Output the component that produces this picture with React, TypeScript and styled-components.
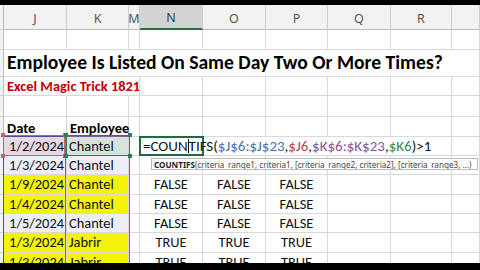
import * as React from 'react'
import styled, { createGlobalStyle } from 'styled-components'

const CELL_FONT = 'Carlito, Calibri, Lato, "Liberation Sans", sans-serif'
const UI_FONT = '"Segoe UI", "Noto Sans", "Liberation Sans", sans-serif'

const WIDTHS = [4, 63, 62, 11, 63, 63, 62, 63, 61, 28]
const LETTERS = ['', 'J', 'K', 'M', 'N', 'O', 'P', 'Q', 'R', '']
// last row runs past the bottom bar and gets clipped by the sheet
const HEIGHTS = [25, 20, 27, 19, 21, 20, 19, 19, 20, 19, 19, 20, 20]

const YELLOW = '#f4f406'
const LAVENDER = '#eeeef8'
const GRID = '#d9d9d9'

type DataRow = { date: string; name: string; fill: string; flags?: string[] }

const dataRows: DataRow[] = [
    { date: '1/3/2024', name: 'Chantel', fill: LAVENDER },
    { date: '1/9/2024', name: 'Chantel', fill: YELLOW, flags: ['FALSE', 'FALSE', 'FALSE'] },
    { date: '1/4/2024', name: 'Chantel', fill: YELLOW, flags: ['FALSE', 'FALSE', 'FALSE'] },
    { date: '1/5/2024', name: 'Chantel', fill: LAVENDER, flags: ['FALSE', 'FALSE', 'FALSE'] },
    { date: '1/3/2024', name: 'Jabrir', fill: YELLOW, flags: ['TRUE', 'TRUE', 'TRUE'] },
    { date: '1/3/2024', name: 'Jabrir', fill: YELLOW, flags: ['TRUE', 'TRUE', 'TRUE'] },
]

const GlobalStyle = createGlobalStyle`
    html, body {
        margin: 0;
        padding: 0;
        background: #000;
    }
    body {
        width: 480px;
        height: 270px;
        overflow: hidden;
        font-family: ${CELL_FONT};
    }
`

const Frame = styled.div`
    display: flex;
    flex-direction: column;
    width: 480px;
    height: 270px;
    background: #000;
`

const Bar = styled.div<{ $h: number }>`
    height: ${p => p.$h}px;
    flex: none;
    background: #000;
`

const Sheet = styled.div`
    position: relative;
    flex: none;
    height: 258px;
    overflow: hidden;
    background: #fff;
    display: grid;
    grid-template-columns: ${WIDTHS.map(w => w + 'px').join(' ')};
    grid-template-rows: ${HEIGHTS.map(h => h + 'px').join(' ')};
`

const ColHead = styled.div<{ $active?: boolean }>`
    box-sizing: border-box;
    display: flex;
    align-items: center;
    justify-content: center;
    background: ${p => (p.$active ? '#d3d3d3' : '#f2f2f2')};
    border-right: 1px solid #cfcfcf;
    border-bottom: ${p => (p.$active ? '2px solid #217346' : '1px solid #bdbdbd')};
    font-family: ${UI_FONT};
    font-size: 12.5px;
    color: ${p => (p.$active ? '#2b4a36' : '#555')};
    padding-top: 2px;
`

const RowHead = styled.div`
    box-sizing: border-box;
    background: #f2f2f2;
    border-right: 1px solid #bdbdbd;
    border-bottom: 1px solid #d4d4d4;
`

const Cell = styled.div<{ $fill?: string; $align?: string; $span?: string }>`
    box-sizing: border-box;
    display: flex;
    align-items: center;
    justify-content: ${p => p.$align || 'flex-start'};
    padding: 0 2px 0 2px;
    white-space: nowrap;
    overflow: visible;
    grid-column: ${p => p.$span || 'auto'};
    background: ${p => p.$fill || 'transparent'};
    border-right: 1px solid ${GRID};
    border-bottom: 1px solid ${GRID};
    font-family: ${CELL_FONT};
    font-size: 14.4px;
    color: #111;
    line-height: 1;
`

const Title = styled.span`
    font-size: 19.6px;
    font-weight: 700;
    color: #000;
    padding-left: 1px;
`

const Subtitle = styled.span`
    font-size: 14.4px;
    font-weight: 700;
    color: #c00000;
    padding-left: 1px;
`

const Label = styled.span`
    font-size: 14.5px;
    font-weight: 700;
    color: #000;
    padding-top: 4px;
    padding-left: 1px;
`

const Formula = styled.span`
    position: relative;
    z-index: 2;
    padding-left: 1px;
    font-size: 15px;
    color: #111;
`

const Ref = styled.span<{ $c: string }>`
    color: ${p => p.$c};
`

const Caret = styled.span`
    display: inline-block;
    width: 0;
    height: 14px;
    border-left: 1px solid #000;
    vertical-align: -2px;
`

const RangeBox = styled.div<{ $l: number; $t: number; $w: number; $h: number; $c: string; $b?: number }>`
    position: absolute;
    box-sizing: border-box;
    left: ${p => p.$l}px;
    top: ${p => p.$t}px;
    width: ${p => p.$w}px;
    height: ${p => p.$h}px;
    border: ${p => p.$b || 1}px solid ${p => p.$c};
    pointer-events: none;
    z-index: 1;
`

const Handle = styled.i<{ $c: string; $x: 'l' | 'r'; $y: 't' | 'b' }>`
    position: absolute;
    width: 4px;
    height: 4px;
    background: ${p => p.$c};
    ${p => (p.$x === 'l' ? 'left: -3px;' : 'right: -3px;')}
    ${p => (p.$y === 't' ? 'top: -3px;' : 'bottom: -3px;')}
`

const Tip = styled.div`
    position: absolute;
    left: 151px;
    top: 153px;
    width: 327px;
    height: 12px;
    box-sizing: border-box;
    z-index: 3;
    display: flex;
    align-items: center;
    padding: 0 1px 0 2px;
    background: #fff;
    border: 1px solid #bcbcbc;
    font-family: ${UI_FONT};
    font-size: 8.15px;
    color: #444;
    white-space: nowrap;
    overflow: hidden;
    b {
        color: #222;
        font-weight: 700;
    }
`

const Corners: React.FC<{ c: string }> = ({ c }) => (
    <>
        <Handle $c={c} $x="l" $y="t" />
        <Handle $c={c} $x="r" $y="t" />
        <Handle $c={c} $x="l" $y="b" />
        <Handle $c={c} $x="r" $y="b" />
    </>
)

const Blank: React.FC<{ from: number }> = ({ from }) => (
    <>
        {WIDTHS.slice(from).map((_, i) => (
            <Cell key={i} />
        ))}
    </>
)

const App: React.FC = () => {
    return (
        <Frame>
            <GlobalStyle />
            <Bar $h={5} />
            <Sheet>
                {LETTERS.map((l, i) =>
                    i === 0 ? <RowHead key={i} /> : <ColHead key={i} $active={l === 'N'}>{l}</ColHead>
                )}

                <RowHead />
                <Blank from={1} />

                <RowHead />
                <Cell $span="2 / -1">
                    <Title>Employee Is Listed On Same Day Two Or More Times?</Title>
                </Cell>

                <RowHead />
                <Cell $span="2 / 5">
                    <Subtitle>Excel Magic Trick 1821</Subtitle>
                </Cell>
                <Blank from={4} />

                <RowHead />
                <Blank from={1} />

                <RowHead />
                <Cell><Label>Date</Label></Cell>
                <Cell><Label>Employee</Label></Cell>
                <Blank from={3} />

                <RowHead />
                <Cell $fill="#e6d9e2" $align="flex-end">1/2/2024</Cell>
                <Cell $fill="#d5e3dc">Chantel</Cell>
                <Cell />
                <Cell $span="5 / 10">
                    <Formula>
                        =COUN<Caret />TIFS(<Ref $c="#4f6fae">$J$6:$J$23</Ref>,<Ref $c="#b8424a">$J6</Ref>,
                        <Ref $c="#8c4f9c">$K$6:$K$23</Ref>,<Ref $c="#2f8a4c">$K6</Ref>)&gt;1
                    </Formula>
                </Cell>
                <Cell />

                {dataRows.map((r, i) => (
                    <React.Fragment key={i}>
                        <RowHead />
                        <Cell $fill={r.fill} $align="flex-end">{r.date}</Cell>
                        <Cell $fill={r.fill}>{r.name}</Cell>
                        <Cell />
                        {[0, 1, 2].map(k => (
                            <Cell key={k} $align="center">{r.flags ? r.flags[k] : ''}</Cell>
                        ))}
                        <Blank from={7} />
                    </React.Fragment>
                ))}

                <RangeBox $l={3} $t={131} $w={63} $h={140} $c="#4a4d9e" />
                <RangeBox $l={65} $t={131} $w={65} $h={140} $c="#8a5aa6" />
                <RangeBox $l={3} $t={130} $w={62} $h={21} $c="#c4607c">
                    <Corners c="#c4607c" />
                </RangeBox>
                <RangeBox $l={66} $t={130} $w={64} $h={21} $c="#2f7d4f">
                    <Corners c="#2f7d4f" />
                </RangeBox>
                <RangeBox $l={139} $t={131} $w={65} $h={20} $c="#1f6b3f" $b={2} />

                <Tip>
                    <b>COUNTIFS</b>(criteria_range1, criteria1, [criteria_range2, criteria2], [criteria_range3, ...)
                </Tip>
            </Sheet>
            <Bar $h={7} />
        </Frame>
    )
}

export default App
